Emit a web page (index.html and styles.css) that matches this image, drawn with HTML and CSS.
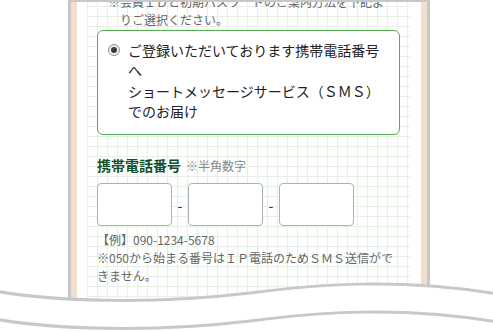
FILE: index.html
```html
<!DOCTYPE html>
<html lang="ja">
<head>
  <meta charset="UTF-8">
  <meta name="viewport" content="width=device-width, initial-scale=1.0">
  <title>携帯電話番号の登録</title>
  <link rel="stylesheet" href="styles.css">
</head>
<body>

  <div class="pagina">
    <div class="celular">
      <div class="tela">
        <div class="formulario">

          <p class="aviso">※会員ＩＤと初期パスワードのご案内方法を下記よりご選択ください。</p>

          <!-- Opção de envio por SMS -->
          <label class="opcao">
            <span class="radio"><span class="radio-ponto"></span></span>
            <span class="opcao-texto">ご登録いただいております携帯電話番号へ<br>ショートメッセージサービス（ＳＭＳ）でのお届け</span>
          </label>

          <div class="campo-titulo">
            <span class="titulo">携帯電話番号</span>
            <span class="titulo-nota">※半角数字</span>
          </div>

          <div class="campo-telefone">
            <input type="text" class="caixa">
            <span class="traco">-</span>
            <input type="text" class="caixa">
            <span class="traco">-</span>
            <input type="text" class="caixa">
          </div>

          <p class="dica">【例】090-1234-5678</p>
          <p class="dica">※050から始まる番号はＩＰ電話のためＳＭＳ送信ができません。</p>

        </div>
      </div>
    </div>

    <!-- Corte ondulado na parte de baixo -->
    <svg class="onda" width="493" height="332" viewBox="0 0 493 332">
      <path d="M -5 291 C 50 301 150 305 250 293 C 320 284 400 278 498 294 L 498 340 L -5 340 Z" fill="#fff"/>
      <path d="M -5 291 C 50 301 150 305 250 293 C 320 284 400 278 498 294" fill="none" stroke="#c8c8c8" stroke-width="3"/>
      <path d="M -5 319 C 50 329 150 333 250 321 C 320 312 400 306 498 322" fill="none" stroke="#c8c8c8" stroke-width="3"/>
    </svg>
  </div>

</body>
</html>
```

FILE: styles.css
```css
/* Reset básico */
* {
  margin: 0;
  padding: 0;
  box-sizing: border-box;
}

body {
  font-family: "Noto Sans CJK JP", sans-serif;
  background-color: #fff;
  color: #222;
  overflow: hidden;
}

.pagina {
  position: relative;
  width: 493px;
  height: 332px;
  padding-left: 68px;
}

/* Moldura do celular */
.celular {
  width: 362px;
  height: 332px;
  border: solid #c8c8c8;
  border-width: 2px 3px 0;
  background-color: #f2dfcc;
  padding: 0 6px;
}

.tela {
  height: 100%;
  background-color: #fff;
  padding: 0 11px 0 10px;
}

.formulario {
  height: 100%;
  overflow: hidden;
  padding: 0 10px;
  background-color: #fff;
  background-image:
    linear-gradient(#e4f2e4 1px, transparent 1px),
    linear-gradient(90deg, #e4f2e4 1px, transparent 1px);
  background-size: 10px 10px;
  background-position: 0 4px;
}

.aviso {
  margin: -9px 10px 0 11px;
  padding-left: 12px;
  text-indent: -12px;
  font-size: 12px;
  line-height: 17.5px;
  color: #666;
}

/* Caixa da opção */
.opcao {
  display: flex;
  align-items: flex-start;
  gap: 8px;
  margin-top: 2px;
  padding: 9px 13px 13px 10px;
  border: 1px solid #55b04f;
  border-radius: 6px;
  background-color: #fff;
}

.radio {
  flex: none;
  display: flex;
  align-items: center;
  justify-content: center;
  width: 12px;
  height: 12px;
  margin-top: 4px;
  border: 1px solid #8e8e8e;
  border-radius: 50%;
  background: linear-gradient(#e8e8e8, #fafafa);
}

.radio-ponto {
  width: 6px;
  height: 6px;
  border-radius: 50%;
  background-color: #3c3c3c;
}

.opcao-texto {
  font-size: 14px;
  line-height: 20.3px;
  color: #222;
}

/* Campo do telefone */
.campo-titulo {
  display: flex;
  align-items: baseline;
  gap: 5px;
  margin-top: 20px;
  line-height: 20px;
}

.titulo {
  font-size: 14px;
  font-weight: bold;
  color: #12502c;
}

.titulo-nota {
  font-size: 12px;
  color: #888;
}

.campo-telefone {
  display: flex;
  align-items: center;
  margin-top: 7px;
}

.caixa {
  width: 75px;
  height: 43px;
  border: 1px solid #b0b0b0;
  border-radius: 4px;
  background-color: #fff;
  outline: none;
}

.traco {
  width: 16px;
  text-align: center;
  font-size: 14px;
  color: #333;
}

.dica {
  font-size: 12px;
  line-height: 18px;
  color: #666;
}

.campo-telefone + .dica {
  margin-top: 5px;
}

.onda {
  position: absolute;
  top: 0;
  left: 0;
  pointer-events: none;
}
```
